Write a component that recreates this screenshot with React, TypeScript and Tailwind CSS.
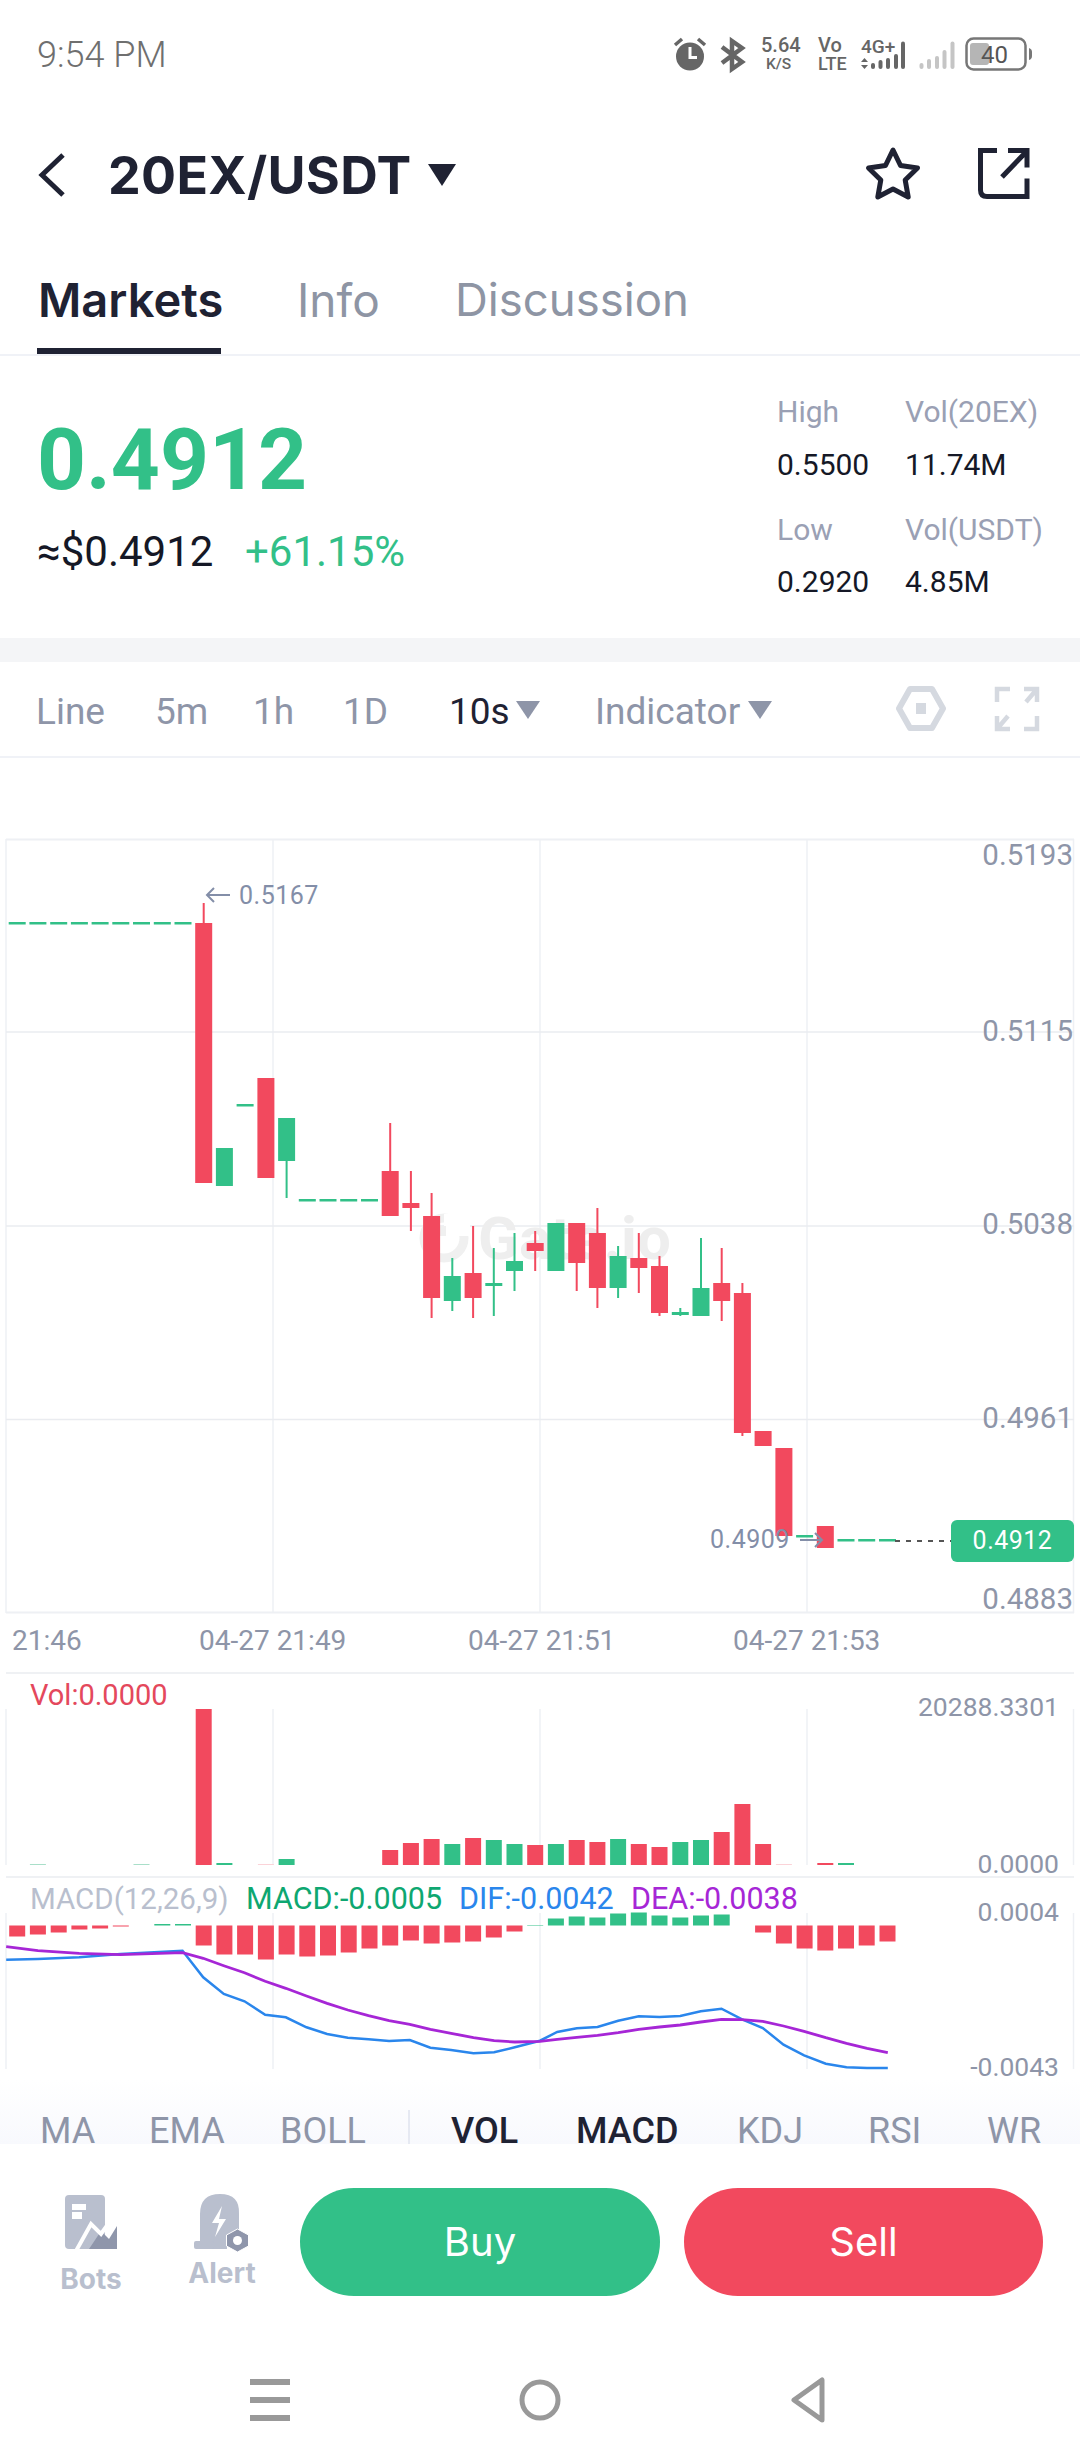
import React from "react";

const RED = "#f2495e";
const GREEN = "#32c088";
const GRID = "#eef0f4";
const X = (i: number) => Math.round((195.2 + 20.72 * i) * 10) / 10;

type C = [number, number, number, number?, number?, string?];
const candles: C[] = [
  [0, 923, 1183, 903, 0, "r"],
  [1, 1148, 1186, 0, 0, "g"],
  [3, 1078, 1178, 0, 0, "r"],
  [4, 1118, 1161, 0, 1198, "g"],
  [9, 1171, 1216, 1123, 0, "r"],
  [10, 1203, 1208, 1171, 1231, "r"],
  [11, 1216, 1298, 1193, 1318, "r"],
  [12, 1276, 1301, 1258, 1311, "g"],
  [13, 1273, 1298, 1226, 1318, "r"],
  [14, 1283, 1286, 1248, 1316, "g"],
  [15, 1261, 1271, 1233, 1291, "g"],
  [16, 1243, 1251, 1231, 1271, "r"],
  [17, 1223, 1271, 0, 0, "g"],
  [18, 1223, 1263, 0, 1291, "r"],
  [19, 1233, 1288, 1208, 1308, "r"],
  [20, 1256, 1288, 1246, 1298, "g"],
  [21, 1258, 1268, 1233, 1293, "r"],
  [22, 1266, 1313, 1256, 1316, "r"],
  [23, 1312, 1315, 1308, 1316, "g"],
  [24, 1288, 1316, 1238, 0, "g"],
  [25, 1283, 1301, 1248, 1321, "r"],
  [26, 1293, 1433, 1283, 1436, "r"],
  [27, 1431, 1446, 0, 0, "r"],
  [28, 1448, 1536, 0, 0, "r"],
  [30, 1526, 1548, 0, 0, "r"],
];
const dashes: [number, number][] = [
  ...[-9, -8, -7, -6, -5, -4, -3, -2, -1].map((i) => [i, 923] as [number, number]),
  [2, 1105],
  [5, 1200],
  [6, 1200],
  [7, 1200],
  [8, 1200],
  [29, 1536],
  [31, 1540],
  [32, 1540],
  [33, 1540],
];
const vols: [number, number, string][] = [
  [-8, 1, "p"], [-3, 1, "p"], [0, 156, "r"], [1, 2, "g"], [3, 1, "q"], [4, 6, "g"], [9, 15, "r"], [10, 22, "r"], [11, 26, "r"],
  [12, 21, "g"], [13, 27, "r"], [14, 25, "g"], [15, 21, "g"], [16, 20, "r"], [17, 21, "g"], [18, 25, "r"], [19, 23, "r"],
  [20, 26, "g"], [21, 21, "r"], [22, 18, "r"], [23, 23, "g"], [24, 25, "g"], [25, 33, "r"], [26, 61, "r"], [27, 21, "r"],
  [28, 1, "q"], [30, 2, "r"], [31, 2, "g"],
];
const hist: [number, number][] = [
  [-9, 11], [-8, 9], [-7, 7], [-6, 4], [-5, 3], [-4, 1], [-2, -1.5], [-1, -1.5], [0, 20], [1, 29], [2, 29], [3, 34], [4, 29], [5, 31], [6, 30], [7, 27],
  [8, 23], [9, 20], [10, 15], [11, 18], [12, 17], [13, 16], [14, 12], [15, 6], [16, -0.5], [17, -7], [18, -9], [19, -8], [20, -12], [21, -13],
  [22, -10], [23, -8], [24, -10], [25, -11], [27, 7], [28, 18], [29, 23], [30, 25], [31, 23], [32, 20], [33, 16],
];
const pts = (a: number[][], b: number[][]) =>
  [
    ...a.map(([x, y]) => `${(x / 2.904).toFixed(1)},${(1660 + y / 3).toFixed(1)}`),
    ...b.map(([x, y]) => `${(540 + x / 2.904).toFixed(1)},${(1660 + y / 3).toFixed(1)}`),
  ].join(" ");
const blue = pts(
  [[18, 899], [110, 897], [230, 892], [350, 882], [530, 872], [590, 952], [650, 1002], [710, 1024], [770, 1064], [830, 1072], [890, 1102], [950, 1122], [1010, 1133], [1070, 1138], [1130, 1143], [1190, 1140], [1250, 1163], [1310, 1170], [1375, 1180], [1435, 1177], [1495, 1162]],
  [[0, 1142], [50, 1116], [107, 1105], [167, 1101], [227, 1082], [287, 1069], [347, 1071], [407, 1068], [467, 1054], [527, 1046], [587, 1078], [647, 1104], [707, 1154], [767, 1186], [830, 1211], [890, 1222], [950, 1224], [1010, 1224]]
);
const purple = pts(
  [[18, 860], [110, 872], [230, 880], [350, 884], [530, 878], [590, 895], [650, 917], [710, 938], [770, 964], [830, 985], [890, 1008], [950, 1030], [1010, 1050], [1070, 1067], [1130, 1082], [1190, 1093], [1250, 1108], [1310, 1120], [1375, 1133], [1435, 1142], [1495, 1146]],
  [[0, 1144], [50, 1138], [107, 1132], [167, 1126], [227, 1118], [287, 1108], [347, 1101], [407, 1095], [467, 1086], [527, 1078], [587, 1079], [647, 1084], [707, 1098], [767, 1114], [830, 1133], [890, 1150], [950, 1165], [1010, 1178]]
);

function StatusIcons() {
  const tx = { fill: "#666", fontFamily: "Roboto" };
  return (
    <svg width="372" height="50" viewBox="664 30 372 50" className="block">
      <circle cx="690" cy="56.5" r="14" fill="#666" />
      <path d="M690 47v10.5h7" stroke="#fff" strokeWidth="3" fill="none" />
      <path d="M675 45l7-6M705 45l-7-6" stroke="#666" strokeWidth="3.5" />
      <path d="M722 47l20 15-10 7V41l10 7-20 15" stroke="#666" strokeWidth="4.5" fill="none" />
      <text x="761" y="52" fontSize="20" fontWeight="500" {...tx}>5.64</text>
      <text x="766" y="69" fontSize="15.5" fontWeight="500" {...tx}>K/S</text>
      <text x="818" y="52" fontSize="20" fontWeight="500" {...tx}>Vo</text>
      <text x="818" y="70" fontSize="18" fontWeight="500" {...tx}>LTE</text>
      <text x="861" y="53" fontSize="19" fontWeight="500" {...tx}>4G+</text>
      <path d="M861 62l3.5-4 3.500 4zM861 65l3.500 4 3.500-4z" fill="#666" />
      {[[873, 63], [880.500, 60], [888, 58], [896, 54], [903, 41.500]].map(([x, t]) => (
        <rect key={x} x={x - 2} y={t} width="4" height={69 - t} rx="2" fill="#666" />
      ))}
      {[[921.500, 63], [929, 59], [937, 56], [944.500, 50], [952.500, 41.500]].map(([x, t]) => (
        <rect key={x} x={x - 2} y={t} width="4" height={69 - t} rx="2" fill="#c5c5c5" />
      ))}
      <rect x="966.500" y="38.500" width="59" height="31" rx="7" fill="none" stroke="#777" strokeWidth="2.500" />
      <rect x="970" y="43" width="19" height="22" rx="3" fill="#b5b5b5" />
      <text x="981" y="63" fontSize="24" fill="#555" fontFamily="Roboto">40</text>
      <path d="M1029 48q3 1 3 4v4q0 3-3 4z" fill="#777" />
    </svg>
  );
}

function GridLines({ top, bottom }: { top: number; bottom: number }) {
  return (
    <>
      {[6, 273, 540, 807, 1073.500].map((x) => (
        <line key={x} x1={x} x2={x} y1={top} y2={bottom} stroke={GRID} strokeWidth="1.500" />
      ))}
    </>
  );
}

function MainChart() {
  return (
    <svg width="1080" height="914" viewBox="0 758 1080 914" className="block">
      <GridLines top={839} bottom={1613} />
      <line x1="6" x2="1074" y1="839.500" y2="839.500" stroke={GRID} strokeWidth="2" />
      <line x1="6" x2="1074" y1="1612.500" y2="1612.500" stroke={GRID} strokeWidth="2" />
      {[1032, 1226, 1419.500].map((y) => (
        <line key={y} x1="6" x2="1074" y1={y} y2={y} stroke="#eaecf0" strokeWidth="1.500" />
      ))}
      <circle cx="444" cy="1238" r="20" fill="none" stroke="#f0f0f0" strokeWidth="9" />
      <rect x="444" y="1214" width="26" height="22" fill="#fff" />
      <rect x="436" y="1226" width="10" height="10" fill="#f0f0f0" />
      <text x="478" y="1259" fontFamily="Roboto" fontSize="60" fontWeight="700" fill="#eeeeee">Gate.io</text>
      {candles.map(([i, t, b, wt, wb, c]) => {
        const col = c === "r" ? RED : GREEN;
        const x = X(i);
        return (
          <g key={i} fill={col}>
            {wt ? <rect x={x + 7.500} y={wt} width="2" height={t - wt} /> : null}
            {wb ? <rect x={x + 7.500} y={b} width="2" height={wb - b} /> : null}
            <rect x={x} y={t} width="17" height={b - t} />
          </g>
        );
      })}
      {dashes.map(([i, y], k) => (
        <rect key={k} x={X(i)} y={y - 1} width="17" height="2.500" fill={GREEN} />
      ))}
      <line x1="895" x2="951" y1="1541" y2="1541" stroke="#555" strokeWidth="2" strokeDasharray="5 6" />
      <path d="M230 895h-23m7-7l-7 7 7 7" fill="none" stroke="#838ea8" strokeWidth="2" />
      <path d="M800 1540h22m-7-7l7 7-7 7" fill="none" stroke="#838ea8" strokeWidth="2" />
    </svg>
  );
}

function VolChart() {
  const col: Record<string, string> = { r: RED, g: GREEN, p: "#a9dfc9", q: "#fbd3d8" };
  return (
    <svg width="1080" height="204" viewBox="0 1672 1080 204" className="block">
      <line x1="6" x2="1074" y1="1673" y2="1673" stroke="#eaecf0" strokeWidth="1.500" />
      <GridLines top={1709} bottom={1865} />
      {vols.map(([i, h, c]) => (
        <rect key={i} x={X(i) + 0.500} y={1865 - h} width="16" height={h} fill={col[c]} />
      ))}
    </svg>
  );
}

function MacdChart() {
  return (
    <svg width="1080" height="204" viewBox="0 1876 1080 204" className="block">
      <line x1="6" x2="1074" y1="1877" y2="1877" stroke="#eaecf0" strokeWidth="1.500" />
      <GridLines top={1913} bottom={2069} />
      {hist.map(([i, h]) => (
        <rect
          key={i}
          x={X(i) + 0.500}
          y={h > 0 ? 1925.500 : 1925.500 + h}
          width="16"
          height={Math.abs(h)}
          fill={h > 0 ? RED : GREEN}
        />
      ))}
      <polyline points={blue} fill="none" stroke="#2a86ec" strokeWidth="2.500" />
      <polyline points={purple} fill="none" stroke="#a626d6" strokeWidth="2.800" />
    </svg>
  );
}

export default function App() {
  return (
    <div className="w-[1080px] h-[2460px] bg-white flex flex-col overflow-hidden font-['Roboto','Liberation_Sans',sans-serif]">
      {/* status bar */}
      <div className="h-[110px] flex items-center pl-[37px] pr-[44px] justify-between">
        <span className="text-[36px] font-light text-[#6f6f6f] leading-none">9:54 PM</span>
        <StatusIcons />
      </div>

      {/* header */}
      <div className="h-[130px] flex items-center pl-[38px] font-['Inter',sans-serif]">
        <svg width="30" height="48" viewBox="38 151 30 48" className="block">
          <path d="M63 155l-21 20 21 20" fill="none" stroke="#1f2233" strokeWidth="5" />
        </svg>
        <span className="ml-[40px] w-[320px] pt-[2px] text-[52px] leading-none font-bold text-[#1f2233] tracking-[0.3px]">20EX/USDT</span>
        <svg width="28" height="22" viewBox="0 0 28 22" className="block">
          <path d="M0 0h28L14 22z" fill="#1f2233" />
        </svg>
        <svg width="62" height="56" viewBox="864 145 62 56" className="block ml-[406px] mt-[-4px]">
          <path
            d="M895 150l7.500 15.500 17 2.500-12.300 12 3 17-15.200-8-15.200 8 3-17-12.300-12 17-2.500z"
            fill="none"
            stroke="#1f2233"
            strokeWidth="5"
            strokeLinejoin="round"
          />
        </svg>
        <svg width="56" height="56" viewBox="975 146 56 56" className="block ml-[52px] mt-[-2px]">
          <path
            d="M996 150.500h-16.500v39.500q0 6.500 6.500 6.500h40v-18M1001 177l25-26M1007 150.500h19v17"
            fill="none"
            stroke="#1f2233"
            strokeWidth="5"
          />
        </svg>
      </div>

      {/* tabs */}
      <div className="flex border-b-2 border-[#f0f2f7] pl-[37px] h-[116px] font-['Inter',sans-serif]">
        <div className="w-[184px] h-[114px] border-b-[6px] border-[#1f2233] pt-[32px]">
          <span className="block pl-[1px] text-[47px] leading-[56px] font-semibold text-[#1f2233] whitespace-nowrap">Markets</span>
        </div>
        <span className="ml-[76px] w-[158px] pt-[32px] text-[46px] leading-[56px] text-[#8e95a4]">Info</span>
        <span className="pt-[32px] text-[45.500px] leading-[56px] text-[#8e95a4]">Discussion</span>
      </div>

      {/* stats */}
      <div className="h-[282px] flex">
        <div className="pl-[37px]">
          <div className="mt-[62px] h-[84px] text-[85.500px] leading-[84px] font-bold text-[#32c088]">0.4912</div>
          <div className="mt-[25px] flex h-[50px] items-center text-[42px] leading-[50px]">
            <span className="w-[208px] text-[#151826]">≈$0.4912</span>
            <span className="text-[#32c088]">+61.15%</span>
          </div>
        </div>
        <div className="ml-auto w-[303px] pt-[28px] text-[30px]">
          <div className="grid grid-cols-[128px_1fr] grid-rows-[54px_52px] items-center">
            <span className="text-[#9aa0b4]">High</span>
            <span className="text-[#9aa0b4]">Vol(20EX)</span>
            <span className="text-[#151826]">0.5500</span>
            <span className="text-[#151826]">11.74M</span>
          </div>
          <div className="mt-[13px] grid grid-cols-[128px_1fr] grid-rows-[52px_53px] items-center">
            <span className="text-[#9aa0b4]">Low</span>
            <span className="text-[#9aa0b4]">Vol(USDT)</span>
            <span className="text-[#151826]">0.2920</span>
            <span className="text-[#151826]">4.85M</span>
          </div>
        </div>
      </div>
      <div className="h-[24px] bg-[#f4f5f7]" />

      {/* toolbar */}
      <div className="h-[96px] flex items-center pl-[36px] border-b-2 border-[#f0f2f7] text-[37px] text-[#8e95a8]">
        <span className="w-[119px] pt-[5px]">Line</span>
        <span className="w-[98px] pt-[5px]">5m</span>
        <span className="w-[90px] pt-[5px]">1h</span>
        <span className="w-[106px] pt-[5px]">1D</span>
        <span className="w-[67px] pt-[5px] text-[#1f2233] font-normal">10s</span>
        <svg width="24" height="18" viewBox="0 0 24 18" className="block mt-[2px]">
          <path d="M0 0h24L12 18z" fill="#8e95a8" />
        </svg>
        <span className="ml-[55px] w-[153px] pt-[5px]">Indicator</span>
        <svg width="24" height="18" viewBox="0 0 24 18" className="block mt-[2px]">
          <path d="M0 0h24L12 18z" fill="#8e95a8" />
        </svg>
        <svg width="50" height="46" viewBox="896 685 50 46" className="block ml-[124px]">
          <path d="M899 707.500L910 688h22l11 19.500L932 727h-22z" fill="none" stroke="#d5d9e0" strokeWidth="6" strokeLinejoin="round" />
          <rect x="916" y="702" width="10" height="11" fill="#d5d9e0" />
        </svg>
        <svg width="46" height="46" viewBox="994 684 46 46" className="block ml-[48px]">
          <path
            d="M997 700v-13h13M1024 687h13v13M1037 687l-11 13M997 714v13h13M997 727l11-13M1037 714v13h-13"
            fill="none"
            stroke="#d5d9e0"
            strokeWidth="4.500"
          />
        </svg>
      </div>

      {/* main chart */}
      <div className="relative h-[914px] text-[29.500px] leading-[30px] text-[#8e95a8]">
        <MainChart />
        <span className="absolute right-[7px] top-[82px]">0.5193</span>
        <span className="absolute right-[7px] top-[258px]">0.5115</span>
        <span className="absolute right-[7px] top-[451px]">0.5038</span>
        <span className="absolute right-[7px] top-[645px]">0.4961</span>
        <span className="absolute right-[7px] top-[826px]">0.4883</span>
        <span className="absolute left-[12px] top-[868px] text-[28px]">21:46</span>
        <span className="absolute left-[199px] top-[868px] text-[28px]">04-27 21:49</span>
        <span className="absolute left-[468px] top-[868px] text-[28px]">04-27 21:51</span>
        <span className="absolute left-[733px] top-[868px] text-[28px]">04-27 21:53</span>
        <span className="absolute left-[239px] top-[123px] text-[25px] tracking-[0.5px] text-[#838ea8]">0.5167</span>
        <span className="absolute left-[710px] top-[767px] text-[25px] tracking-[0.5px] text-[#838ea8]">0.4909</span>
        <div className="absolute left-[951px] top-[762px] w-[123px] h-[42px] rounded-[6px] bg-[#32c088] flex items-center justify-center text-[25px] tracking-[0.5px] text-white">
          0.4912
        </div>
      </div>

      {/* vol */}
      <div className="relative h-[204px] text-[26.500px] leading-[30px] text-[#8e95a8]">
        <VolChart />
        <span className="absolute left-[30px] top-[8px] text-[29px] text-[#e4485c]">Vol:0.0000</span>
        <span className="absolute right-[21px] top-[20px]">20288.3301</span>
        <span className="absolute right-[21px] top-[177px]">0.0000</span>
      </div>

      {/* macd */}
      <div className="relative h-[204px] text-[26.500px] leading-[30px] text-[#8e95a8]">
        <MacdChart />
        <span className="absolute left-[30px] top-[8px] text-[29.500px] text-[#b9bfce]">MACD(12,26,9)</span>
        <span className="absolute left-[246px] top-[8px] text-[30.500px] text-[#0ea771]">MACD:-0.0005</span>
        <span className="absolute left-[459px] top-[8px] text-[30.500px] text-[#2a86ec]">DIF:-0.0042</span>
        <span className="absolute left-[631px] top-[8px] text-[30.500px] text-[#a626d6]">DEA:-0.0038</span>
        <span className="absolute right-[21px] top-[21px]">0.0004</span>
        <span className="absolute right-[21px] top-[176px]">-0.0043</span>
      </div>

      {/* indicators */}
      <div className="h-[64px] flex items-end pl-[40px] bg-linear-to-b from-white to-[#f8f9fd] text-[36px] leading-[26px] text-[#8e95a8]">
        <span className="w-[109px]">MA</span>
        <span className="w-[131px]">EMA</span>
        <span className="w-[128px]">BOLL</span>
        <span className="w-[43px] h-[34px] border-l-2 border-[#e6e9f2]" />
        <span className="w-[125px] font-medium text-[#1f2233]">VOL</span>
        <span className="w-[161px] font-medium text-[#1f2233]">MACD</span>
        <span className="w-[131px]">KDJ</span>
        <span className="w-[119px]">RSI</span>
        <span>WR</span>
      </div>

      {/* action bar */}
      <div className="h-[196px] flex pt-[44px] font-['Inter',sans-serif]">
        <div className="w-[182px] flex flex-col items-center h-[108px]">
          <svg width="56" height="54" viewBox="62 2195 56 54" className="block mt-[7px]">
            <path d="M68 2195h32q4 0 4 4v50H68q-4 0-4-4v-46q0-4 4-4z" fill="#b9bfce" />
            <rect x="71" y="2204" width="14" height="6" fill="#fff" />
            <rect x="71" y="2212" width="10" height="7" fill="#fff" />
            <path d="M88 2249l12-18 8 8 8-13v23z" fill="#8f96ab" />
            <path d="M75 2251l15-27 10 10 10-14" fill="none" stroke="#fff" strokeWidth="4" />
          </svg>
          <span className="mt-[15px] text-[28px] leading-[30px] font-bold text-[#b9bfce]">Bots</span>
        </div>
        <div className="w-[80px] flex flex-col items-center h-[108px]">
          <svg width="60" height="58" viewBox="193 2194 60 58" className="block mt-[6px]">
            <path d="M201 2249v-35q0-20 20-20t19 20v18l-12 6v11z" fill="#b9bfce" />
            <rect x="195" y="2241" width="20" height="8" rx="2" fill="#b9bfce" />
            <path d="M223 2206l-10 17h7l-4 14 11-18h-7z" fill="#fff" />
            <path d="M238.500 2229l11 6v11l-11 6-11-6v-11z" fill="#8f96ab" stroke="#fff" strokeWidth="1" />
            <circle cx="238.500" cy="2240.500" r="4.500" fill="#fff" />
          </svg>
          <span className="mt-[6px] text-[28px] leading-[30px] font-bold text-[#b9bfce]">Alert</span>
        </div>
        <button className="ml-[38px] w-[360px] h-[108px] rounded-full bg-[#32c088] text-white text-[40px]">Buy</button>
        <button className="ml-[24px] w-[359px] h-[108px] rounded-full bg-[#f2495e] text-white text-[40px]">Sell</button>
      </div>

      {/* nav */}
      <div className="flex-1 flex items-center pl-[250px]">
        <svg width="40" height="44" viewBox="250 2378 40 44" className="block">
          <path d="M250 2382h40M250 2400h40M250 2418h40" stroke="#999" strokeWidth="6" />
        </svg>
        <svg width="44" height="44" viewBox="518 2378 44 44" className="block ml-[228px]">
          <circle cx="540" cy="2400" r="18" fill="none" stroke="#999" strokeWidth="5" />
        </svg>
        <svg width="36" height="48" viewBox="790 2376 36 48" className="block ml-[228px]">
          <path d="M822 2380v40l-28-20z" fill="none" stroke="#999" strokeWidth="5" strokeLinejoin="round" />
        </svg>
      </div>
    </div>
  );
}
